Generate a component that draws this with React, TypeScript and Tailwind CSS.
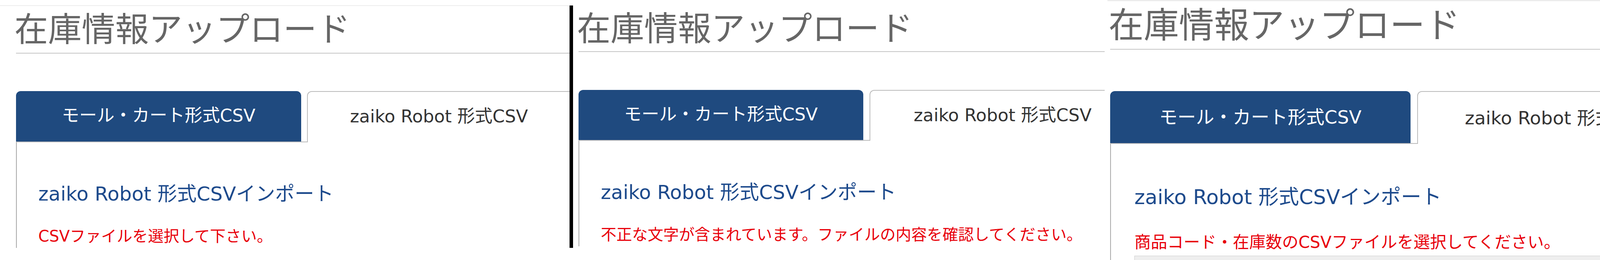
import React from "react";

type PanelProps = {
  width: string;
  top: React.ReactNode;
  inset: string;
  titleCls: string;
  lineCls: string;
  tabsCls: string;
  blueCls: string;
  gapCls: string;
  whiteCls: string;
  bodyCls: string;
  headCls: string;
  msgCls: string;
  message: string;
  extra?: React.ReactNode;
};

const Panel: React.FC<PanelProps> = (p) => (
  <div className={`shrink-0 overflow-hidden ${p.width}`}>
    {p.top}
    <div className={p.inset}>
      {/* page title */}
      <h1 className={`leading-none text-[#666666] whitespace-nowrap font-normal ${p.titleCls}`}>
        在庫情報アップロード
      </h1>
      <div className={`h-[2px] bg-[#c6c6c6] ${p.lineCls}`} />

      {/* tabs */}
      <div className={`flex items-end ${p.tabsCls}`}>
        <div
          className={`shrink-0 flex justify-center bg-[#1f4a7f] text-white leading-none whitespace-nowrap rounded-t-[12px] border-b-2 border-[#bbbbbb] ${p.blueCls}`}
        >
          モール・カート形式CSV
        </div>
        <div className={`shrink-0 h-[2px] bg-[#bbbbbb] ${p.gapCls}`} />
        <div
          className={`shrink-0 bg-white text-[#333333] leading-none whitespace-nowrap border-t-2 border-l-2 border-[#bbbbbb] rounded-tl-[12px] ${p.whiteCls}`}
        >
          zaiko Robot 形式CSV
        </div>
      </div>

      {/* tab body */}
      <div className={`border-l-2 border-[#a8a8a8] ${p.bodyCls}`}>
        <h2 className={`leading-none text-[#1d4a8c] whitespace-nowrap font-normal ${p.headCls}`}>
          zaiko Robot 形式CSVインポート
        </h2>
        <p className={`leading-none text-[#e8000b] whitespace-nowrap ${p.msgCls}`}>{p.message}</p>
        {p.extra}
      </div>
    </div>
  </div>
);

export default function App() {
  return (
    <div className="flex w-[4113px] h-[665px] bg-white overflow-hidden font-['DejaVu_Sans','Noto_Sans_CJK_JP',sans-serif]">
      <Panel
        width="w-[1458px]"
        top={<div className="mt-[14px] h-[1px] bg-[#dddddd]" />}
        inset="pl-[41px]"
        titleCls="text-[86px] mt-[18px] -ml-[4px]"
        lineCls="mt-[16px]"
        tabsCls="mt-[96px]"
        blueCls="w-[730px] h-[131px] pt-[40px] text-[45px]"
        gapCls="w-[15px]"
        whiteCls="h-[131px] pt-[40px] pl-[108px] pr-[108px] text-[45px]"
        bodyCls="h-[270px] pl-[55px] pt-[107px]"
        headCls="text-[50px]"
        msgCls="text-[40px] mt-[63px]"
        message="CSVファイルを選択して下さい。"
      />

      {/* separator between screenshots */}
      <div className="shrink-0 mt-[14px] h-[620px] w-[9px] bg-black" />

      <Panel
        width="w-[1361px]"
        top={<div className="mt-[14px] h-[1px]" />}
        inset="pl-[14px]"
        titleCls="text-[86px] mt-[16px] -ml-[4px]"
        lineCls="mt-[14px]"
        tabsCls="mt-[97px]"
        blueCls="w-[729px] h-[130px] pt-[40px] text-[45px]"
        gapCls="w-[16px]"
        whiteCls="h-[130px] pt-[40px] pl-[111px] pr-[108px] text-[45px]"
        bodyCls="h-[270px] pl-[55px] pt-[107px]"
        headCls="text-[50px]"
        msgCls="text-[40px] mt-[63px]"
        message="不正な文字が含まれています。ファイルの内容を確認してください。"
      />
      <div className="shrink-0 w-[7px]" />

      <Panel
        width="flex-1"
        top={<div className="h-[3px] bg-[#ececec]" />}
        inset="pl-[7px]"
        titleCls="text-[90px] mt-[17px] -ml-[4px]"
        lineCls="mt-[15px]"
        tabsCls="mt-[106px]"
        blueCls="w-[769px] h-[135px] pt-[43px] text-[47px]"
        gapCls="w-[17px]"
        whiteCls="h-[135px] pt-[43px] pl-[120px] pr-[110px] text-[47px]"
        bodyCls="h-[400px] pl-[60px] pt-[110px]"
        headCls="text-[52px]"
        msgCls="text-[42px] mt-[69px]"
        message="商品コード・在庫数のCSVファイルを選択してください。"
        extra={<div className="mt-[13px] h-[40px] border border-[#cccccc] bg-[#eeeeee]" />}
      />
    </div>
  );
}
